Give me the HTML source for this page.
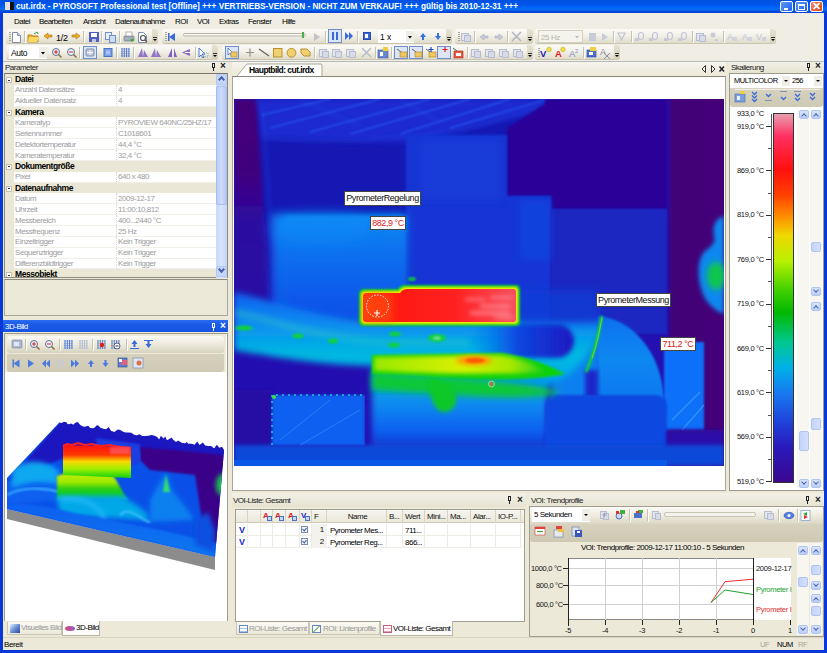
<!DOCTYPE html>
<html><head><meta charset="utf-8">
<style>
*{margin:0;padding:0;box-sizing:border-box}
html,body{width:827px;height:653px;overflow:hidden;background:#0838d8;font-family:"Liberation Sans",sans-serif;font-size:9px;color:#000}
.a{position:absolute}
#title{left:0;top:0;width:827px;height:13px;background:linear-gradient(#0050e0 0%,#0056ec 35%,#0062f8 55%,#0a6cf0 75%,#0048dc 88%,#0040d4 100%)}
#title .t{left:16px;top:0px;color:#fff;font-weight:bold;font-size:8.2px;line-height:13px;white-space:nowrap}
#client{left:3px;top:13px;width:821px;height:637px;background:#ece9d8}
.menu span{position:absolute;top:17px;font-size:8px;letter-spacing:-0.55px;line-height:10px;white-space:nowrap}
.tb{position:absolute;height:15px;border-radius:3px;background:linear-gradient(#fbfaf6 0%,#f3f1e8 45%,#dfdccb 100%);border-bottom:1px solid #c9c5b0}
.grip{position:absolute;left:3px;top:3px;width:2px;height:9px;background:repeating-linear-gradient(#a9a58e 0 1px,transparent 1px 2px)}
.chev{position:absolute;width:6px;height:15px;top:0;right:0;background:linear-gradient(#e6e2d0,#d2ceb8);border-radius:0 3px 3px 0}
.chev:after{content:"";position:absolute;left:1px;top:10px;width:0;height:0;border-left:2px solid transparent;border-right:2px solid transparent;border-top:2px solid #000}.chev:before{content:"";position:absolute;left:1px;top:8px;width:4px;height:1px;background:#333}
.sep{position:absolute;top:2px;width:1px;height:11px;background:#c5c2b2}
.ic{position:absolute;width:10px;height:10px}
.ph{position:absolute;height:12px;background:#ece9d8;border-bottom:1px solid #fff}
.ph .t{position:absolute;left:3px;top:1px;font-size:9px;line-height:10px;color:#222;white-space:nowrap}

.tx{font-size:8px;letter-spacing:-0.5px;white-space:nowrap;line-height:10px}
.pgc{left:0px;width:211px;height:10.86px;background:#ebe7d6;font-weight:bold;font-size:8.5px;line-height:11px;letter-spacing:-0.45px}
.pgc span{position:absolute;left:10px;top:0}
.pgc .mb{position:absolute;left:1px;top:3px;width:6px;height:6px;border:1px solid #c4c0ac;background:#fff}
.pgc .mb:after{content:"";position:absolute;left:1px;top:1.5px;width:2px;height:1px;background:#333}
.pgr{left:0px;width:211px;height:10.86px;background:#fff;color:#9c9c9c;font-size:8px;letter-spacing:-0.45px;line-height:10.5px;border-bottom:1px solid #f0efe8}
.pgr:before{content:"";position:absolute;left:0;top:-1px;width:9px;height:11.86px;background:#ebe7d6}
.pgr .n{position:absolute;left:10px;top:0.5px}
.pgr .v{position:absolute;left:113px;top:0.5px}
.pgr:after{content:"";position:absolute;left:111px;top:0;width:1px;height:10px;border-left:1px dotted #d8d8d8}

.lbl{background:#fff;border:1px solid #444;font-size:9px;line-height:12px;letter-spacing:-0.45px;text-align:center;white-space:nowrap;color:#111}
.lbl.red{color:#e02020}

.hdr{position:absolute;height:12px;background:linear-gradient(#f3f1e7,#e6e3d2)}
.pin{position:absolute;width:3px;height:5px;border:1px solid #222}
.pin:after{content:"";position:absolute;left:0px;top:4px;width:1px;height:3px;background:#222}
.xx{position:absolute;font-size:10px;line-height:12px;font-weight:bold;color:#222}
.sbb{position:absolute;width:10px;height:9px;background:linear-gradient(#d8e4fd,#bcd0f8);border:1px solid #b0c4f0;border-radius:2px}
.sbb.u:after{content:"";position:absolute;left:2px;top:3px;width:3px;height:3px;border-left:1.5px solid #4d61a8;border-top:1.5px solid #4d61a8;transform:rotate(45deg)}
.sbb.d:after{content:"";position:absolute;left:2px;top:0px;width:3px;height:3px;border-right:1.5px solid #4d61a8;border-bottom:1.5px solid #4d61a8;transform:rotate(45deg)}
.sth{position:absolute;width:10px;height:10px;background:linear-gradient(90deg,#c4d4fa,#d4e0fc);border:1px solid #b0c4f0;border-radius:2px}
.sl{position:absolute;font-size:7.5px;line-height:9px;letter-spacing:-0.3px;white-space:nowrap;color:#111}
.gh{position:absolute;top:510px;height:13px;border-right:1px solid #d6d3c3;font-size:8px;line-height:13px;letter-spacing:-0.4px;white-space:nowrap;color:#111;overflow:hidden}
.gc{position:absolute;height:12px;border-right:1px solid #ecebe4;border-bottom:1px solid #ecebe4;font-size:8px;line-height:12px;letter-spacing:-0.3px;white-space:nowrap;color:#111}
</style></head><body>
<div id="title" class="a">
 <div class="a" style="left:5px;top:2px;width:9px;height:8px;background:linear-gradient(90deg,#e8e0e0 0 50%,#111 50%)"></div>
 <div class="a t">cut.irdx - PYROSOFT Professional test [Offline] +++ VERTRIEBS-VERSION - NICHT ZUM VERKAUF! +++ gültig bis 2010-12-31 +++</div>
 <div class="a" style="left:780px;top:1px;width:13px;height:11px;border:1px solid #fff;border-radius:2px;background:linear-gradient(135deg,#5a9cff,#1e5ff0)"><div class="a" style="left:3px;top:6px;width:4px;height:2px;background:#fff"></div></div>
 <div class="a" style="left:795px;top:1px;width:13px;height:11px;border:1px solid #fff;border-radius:2px;background:linear-gradient(135deg,#5a9cff,#1e5ff0)"><div class="a" style="left:2px;top:2px;width:7px;height:6px;border:1px solid #fff;border-top-width:2px"></div></div>
 <div class="a" style="left:810px;top:1px;width:13px;height:11px;border:1px solid #fff;border-radius:2px;background:linear-gradient(135deg,#f08a6a,#d8401a)"><div class="a" style="left:1px;top:-2px;color:#fff;font-weight:bold;font-size:11px;line-height:12px">✕</div></div>
</div>
<div id="client" class="a"></div>
<div class="a" style="left:3px;top:13px;width:821px;height:48px;background:#f0eee4"></div>
<!-- menu -->
<div class="menu">
 <span style="left:14px">Datei</span><span style="left:39px">Bearbeiten</span><span style="left:83px">Ansicht</span><span style="left:115px">Datenaufnahme</span><span style="left:175px">ROI</span><span style="left:197px">VOI</span><span style="left:219px">Extras</span><span style="left:248px">Fenster</span><span style="left:282px">Hilfe</span>
</div>
<!-- toolbars row1 -->
<div class="tb" style="left:6px;top:29px;width:152px"><div class="grip"></div><div class="chev"></div></div>
<div class="tb" style="left:162px;top:29px;width:290px"><div class="grip"></div><div class="chev"></div></div>
<div class="tb" style="left:455px;top:29px;width:78px"><div class="grip"></div><div class="chev"></div></div>
<div class="tb" style="left:535px;top:29px;width:241px"><div class="grip"></div><div class="chev"></div></div>
<!-- toolbars row2 -->
<div class="tb" style="left:6px;top:45px;width:212px"><div class="grip"></div><div class="chev"></div></div>
<div class="tb" style="left:222px;top:45px;width:311px"><div class="grip"></div><div class="chev"></div></div>
<div class="tb" style="left:535px;top:45px;width:85px"><div class="grip"></div><div class="chev"></div></div>


<!-- Parameter panel -->
<div class="a" style="left:3px;top:61px;width:821px;height:1px;background:#b4bcbc"></div>
<div class="a" style="left:3px;top:62px;width:225px;height:11px;background:linear-gradient(#f3f1e7,#e6e3d2)"></div>
<div class="a tx" style="left:5px;top:63px;color:#222">Parameter</div>
<div class="a" style="left:212px;top:63px;width:3px;height:5px;border:1px solid #222;border-bottom-width:1px"></div><div class="a" style="left:213px;top:68px;width:1px;height:3px;background:#222"></div>
<div class="a" style="left:220px;top:60px;font-size:10px;line-height:12px;font-weight:bold;color:#222">×</div>
<div class="a" style="left:4px;top:73px;width:224px;height:205px;border:1px solid #8e8c7e;border-top:1px solid #7a786c;background:#fff;overflow:hidden">
<div class="a pgc" style="top:0.00px"><div class="mb"></div><span>Datei</span></div>
<div class="a pgr" style="top:10.86px"><span class="n">Anzahl Datensätze</span><span class="v">4</span></div>
<div class="a pgr" style="top:21.72px"><span class="n">Aktueller Datensatz</span><span class="v">4</span></div>
<div class="a pgc" style="top:32.58px"><div class="mb"></div><span>Kamera</span></div>
<div class="a pgr" style="top:43.44px"><span class="n">Kameratyp</span><span class="v">PYROVIEW 640NC/25HZ/17 X13</span></div>
<div class="a pgr" style="top:54.30px"><span class="n">Seriennummer</span><span class="v">C1018601</span></div>
<div class="a pgr" style="top:65.16px"><span class="n">Detektortemperatur</span><span class="v">44,4 °C</span></div>
<div class="a pgr" style="top:76.02px"><span class="n">Kameratemperatur</span><span class="v">32,4 °C</span></div>
<div class="a pgc" style="top:86.88px"><div class="mb"></div><span>Dokumentgröße</span></div>
<div class="a pgr" style="top:97.74px"><span class="n">Pixel</span><span class="v">640 x 480</span></div>
<div class="a pgc" style="top:108.60px"><div class="mb"></div><span>Datenaufnahme</span></div>
<div class="a pgr" style="top:119.46px"><span class="n">Datum</span><span class="v">2009-12-17</span></div>
<div class="a pgr" style="top:130.32px"><span class="n">Uhrzeit</span><span class="v">11:00:10,812</span></div>
<div class="a pgr" style="top:141.18px"><span class="n">Messbereich</span><span class="v">400...2440 °C</span></div>
<div class="a pgr" style="top:152.04px"><span class="n">Messfrequenz</span><span class="v">25 Hz</span></div>
<div class="a pgr" style="top:162.90px"><span class="n">Einzeltrigger</span><span class="v">Kein Trigger</span></div>
<div class="a pgr" style="top:173.76px"><span class="n">Sequenztrigger</span><span class="v">Kein Trigger</span></div>
<div class="a pgr" style="top:184.62px"><span class="n">Differenzbildtrigger</span><span class="v">Kein Trigger</span></div>
<div class="a pgc" style="top:195.48px"><div class="mb"></div><span>Messobjekt</span></div>
</div>

<div class="a" style="left:216px;top:74px;width:11px;height:204px;background:linear-gradient(90deg,#c8d8fb,#d8e4fd 50%,#c4d4f8)"></div>
<div class="a" style="left:216px;top:86px;width:11px;height:119px;background:linear-gradient(90deg,#b9cdf8,#cfdcfb 50%,#b4c8f4);border:1px solid #a8bdf0;border-radius:2px"></div>
<div class="a" style="left:216px;top:74px;width:11px;height:11px;background:#c5d6fc;border:1px solid #b4c8f4;border-radius:2px"></div>
<div class="a" style="left:219px;top:77px;width:5px;height:5px;border-left:2px solid #4d61a8;border-top:2px solid #4d61a8;transform:rotate(45deg)"></div>
<div class="a" style="left:216px;top:266px;width:11px;height:11px;background:#c5d6fc;border:1px solid #b4c8f4;border-radius:2px"></div>
<div class="a" style="left:219px;top:267px;width:5px;height:5px;border-right:2px solid #4d61a8;border-bottom:2px solid #4d61a8;transform:rotate(45deg)"></div>
<!-- description area -->
<div class="a" style="left:4px;top:279px;width:224px;height:37px;background:#ece9d8;border:1px solid #a9a79a;border-top:1px solid #8e8c7e"></div>
<!-- 3D-Bild panel -->
<div class="a" style="left:3px;top:320px;width:225px;height:12px;background:linear-gradient(#2a6cf0,#1a5ae8 40%,#1654e0)"></div>
<div class="a tx" style="left:5px;top:322px;color:#fff">3D-Bild</div>
<div class="a" style="left:212px;top:323px;width:3px;height:5px;border:1px solid #fff"></div><div class="a" style="left:213px;top:328px;width:1px;height:3px;background:#fff"></div>
<div class="a" style="left:220px;top:320px;font-size:10px;line-height:12px;font-weight:bold;color:#fff">×</div>
<div class="a" style="left:4px;top:333px;width:224px;height:289px;border:1px solid #9d9b8c;background:#fff"></div>
<div class="a" style="left:5px;top:334px;width:221px;height:38px;background:#ece9d8"></div>
<div class="a" style="left:7px;top:336px;width:217px;height:17px;border-radius:3px;background:linear-gradient(#fbfaf5,#e9e6d6 60%,#d6d2bf)"></div>
<div class="a" style="left:7px;top:354px;width:217px;height:18px;border-radius:0 0 3px 3px;background:linear-gradient(#d5d1bd,#cfcab5)"></div>
<svg class="a" style="left:5px;top:372px" width="220" height="249" viewBox="5 372 220 249">
<defs>
<filter id="c1" x="-20%" y="-20%" width="140%" height="140%"><feGaussianBlur stdDeviation="1"/></filter>
<filter id="c2" x="-30%" y="-30%" width="160%" height="160%"><feGaussianBlur stdDeviation="2.5"/></filter>
<filter id="c4" x="-30%" y="-30%" width="160%" height="160%"><feGaussianBlur stdDeviation="4"/></filter>
<clipPath id="surf"><polygon points="59,423 224,450 215,557 7,509 7,478"/></clipPath>
<linearGradient id="rb" x1="0" y1="0" x2="0" y2="1"><stop offset="0" stop-color="#ff1010"/><stop offset="0.3" stop-color="#ff3800"/><stop offset="0.5" stop-color="#f8d800"/><stop offset="0.72" stop-color="#a0f000"/><stop offset="1" stop-color="#10d010"/></linearGradient>
<linearGradient id="hill" x1="0" y1="0" x2="0" y2="1"><stop offset="0" stop-color="#d0f000"/><stop offset="0.4" stop-color="#a0e800"/><stop offset="0.6" stop-color="#30d010"/><stop offset="0.8" stop-color="#10c830"/><stop offset="1" stop-color="#10b0c0"/></linearGradient>
<linearGradient id="front" x1="0" y1="0" x2="0" y2="1"><stop offset="0" stop-color="#0a60f0"/><stop offset="1" stop-color="#0a78f0"/></linearGradient>
</defs>
<!-- gray base -->
<polygon points="7,509 215,557 215,570 7,519" fill="#8c8c8c"/>
<g clip-path="url(#surf)">
<rect x="5" y="420" width="220" height="140" fill="#0a50e8"/>
<polygon points="59,423 224,450 224,468 140,452 95,445 40,468 7,482" fill="#1c18c0" filter="url(#c1)"/>
<polygon points="140,447 224,455 224,545 205,540 195,475 150,470 140,460" fill="#3a0488" filter="url(#c1)"/>
<polygon points="96,438 140,444 140,464 100,468" fill="#1a3ce0" filter="url(#c1)"/>
<polygon points="7,482 40,466 60,468 60,500 7,505" fill="#0a60f0" filter="url(#c2)"/>
<path d="M12,470 C25,458 45,460 58,470 L58,484 C40,480 25,482 12,488 Z" fill="#10a8f0" filter="url(#c2)"/>
<path d="M7,495 C20,488 40,486 60,492" stroke="#40b8ff" stroke-width="2" fill="none" filter="url(#c1)"/>
<path d="M57,500 L57,476 C70,470 100,468 112,474 C118,482 122,492 128,500 Z" fill="url(#hill)" filter="url(#c1)"/>
<ellipse cx="98" cy="472" rx="8" ry="2.5" fill="#ffa000" filter="url(#c1)"/>
<path d="M57,497 L124,497 C135,505 150,512 150,520 L60,515 Z" fill="#00a8e8" filter="url(#c2)"/>
<path d="M60,500 C80,495 100,505 105,520" stroke="#30c0ff" stroke-width="3" fill="none" filter="url(#c2)"/>
<path d="M150,500 L166,472 L172,490 C180,500 188,510 195,520 L150,522 Z" fill="#0a80f0" filter="url(#c2)"/>
<path d="M163,492 L166,474 L170,492 Z" fill="#30e070" filter="url(#c1)"/>
<ellipse cx="223" cy="485" rx="7" ry="11" fill="#18c848" filter="url(#c2)"/>
<path d="M7,505 C40,500 70,515 110,520 C150,528 190,535 215,545 L215,557 L7,509 Z" fill="url(#front)" filter="url(#c1)"/>
<path d="M120,515 C130,505 140,520 150,522" stroke="#40c0ff" stroke-width="2" fill="none" filter="url(#c1)"/>
<polygon points="195,520 208,512 215,530 215,552 195,545" fill="#0a50e0" filter="url(#c2)"/>
</g>
<!-- spikes on back edge -->
<polygon points="59.0,422.5 61.7,422.9 63.9,421.8 66.4,422.2 68.0,424.5 71.3,423.5 73.3,424.8 75.2,422.7 77.7,422.1 80.3,425.0 83.0,426.4 85.0,426.8 88.2,425.8 90.5,428.2 93.4,428.6 95.2,426.9 96.8,425.2 98.3,425.4 100.4,427.8 103.3,428.8 106.2,429.2 108.5,427.1 111.2,431.0 114.4,432.1 116.0,430.8 117.9,429.6 120.3,430.0 123.5,432.1 126.0,432.5 128.7,432.4 131.4,432.8 133.3,434.2 136.2,435.6 139.4,434.2 142.2,436.1 145.1,436.1 148.6,435.7 151.2,435.1 154.0,435.5 157.2,437.1 159.2,439.4 160.8,435.7 163.6,438.6 165.3,436.4 166.9,440.2 168.5,439.4 171.5,437.4 173.2,439.7 176.0,442.1 178.2,440.5 180.4,441.9 182.9,443.3 185.0,443.6 186.7,441.9 188.3,443.7 191.7,443.7 194.5,444.7 197.3,441.6 199.5,445.0 202.9,442.6 205.2,445.4 208.4,446.0 211.2,445.9 214.1,448.4 216.8,444.8 219.3,447.7 222.1,446.7 224,450 224,454 59,427" fill="#1c18c0"/>
<!-- red block -->
<polygon points="63,445 131,447 131,478 63,475" fill="url(#rb)"/>
<polyline points="63,446 67,444 72,445 78,443 85,445 92,444 100,446 110,445 120,447 131,448" fill="none" stroke="#ff2020" stroke-width="2"/>
<rect x="110" y="447" width="20" height="7" fill="#ff7090" opacity="0.5" filter="url(#c1)"/>
</svg>

<!-- tabs -->
<div class="a" style="left:3px;top:621px;width:225px;height:16px;background:#ece9d8"></div>
<div class="a" style="left:7px;top:622px;width:55px;height:13px;background:linear-gradient(#fbfaf5,#ece9d8);border:1px solid #c9c6b5;border-top:none"></div>
<div class="a" style="left:62px;top:621px;width:38px;height:15px;background:#fcfcfa;border:1px solid #b9b6a5;border-top:none"></div>
<div class="a" style="left:10px;top:624px;width:10px;height:9px;background:linear-gradient(135deg,#e8f0ff,#6a90d8 50%,#2a4a9a)"></div>
<div class="a tx" style="left:21px;top:623px;color:#9a9a9a">Visuelles Bild</div>
<div class="a" style="left:65px;top:626px;width:10px;height:5px;border-radius:50%;background:linear-gradient(90deg,#e04070,#8a60d0)"></div>
<div class="a tx" style="left:76px;top:623px;color:#000">3D-Bild</div>


<!-- main doc -->
<div class="a" style="left:232px;top:62px;width:494px;height:14px;background:linear-gradient(#f6f4ec,#ece9d8)"></div>
<svg class="a" style="left:236px;top:63px" width="88" height="14"><path d="M1,13 L11,1 L85,1 L86,2 L86,13" fill="#fff" stroke="#a9a795"/></svg>
<div class="a" style="left:249px;top:65px;font-weight:bold;font-size:8.5px;line-height:10px;letter-spacing:-0.55px">Hauptbild: cut.irdx</div>
<svg class="a" style="left:700px;top:64px" width="26" height="10"><path d="M5.5,1.5 L2,5 L5.5,8.5 Z" fill="#f6f4ec" stroke="#333"/><path d="M11.5,1.5 L15,5 L11.5,8.5 Z" fill="#f6f4ec" stroke="#333"/><path d="M19.5,2.5 L24,7.5 M24,2.5 L19.5,7.5" stroke="#222" stroke-width="1.5"/></svg>
<div class="a" style="left:232px;top:76px;width:494px;height:415px;background:#fff;border:1px solid #a6a498;border-top:1px solid #8a887a"></div>
<svg class="a" style="left:234px;top:99px" width="490" height="367" viewBox="234 99 490 367">
<defs>
<filter id="b1" x="-20%" y="-20%" width="140%" height="140%"><feGaussianBlur stdDeviation="1"/></filter>
<filter id="b2" x="-20%" y="-20%" width="140%" height="140%"><feGaussianBlur stdDeviation="2"/></filter>
<filter id="b3" x="-30%" y="-30%" width="160%" height="160%"><feGaussianBlur stdDeviation="3"/></filter>
<filter id="b5" x="-30%" y="-30%" width="160%" height="160%"><feGaussianBlur stdDeviation="5"/></filter>
<filter id="b8" x="-50%" y="-50%" width="200%" height="200%"><feGaussianBlur stdDeviation="8"/></filter>
<linearGradient id="lstripv" x1="0" y1="0" x2="0" y2="1"><stop offset="0" stop-color="#440078"/><stop offset="0.3" stop-color="#40047e"/><stop offset="0.5" stop-color="#2c08a0"/><stop offset="1" stop-color="#2808a4"/></linearGradient>
<linearGradient id="lstrip" x1="0" y1="0" x2="1" y2="0"><stop offset="0" stop-color="#440078"/><stop offset="0.75" stop-color="#40047e"/><stop offset="1" stop-color="#2410b0"/></linearGradient>
<linearGradient id="rstrip" x1="0" y1="0" x2="1" y2="0"><stop offset="0" stop-color="#300a9c"/><stop offset="0.12" stop-color="#420278"/><stop offset="1" stop-color="#440078"/></linearGradient>
<linearGradient id="band" x1="0" y1="0" x2="0" y2="1"><stop offset="0" stop-color="#0a60f0"/><stop offset="0.35" stop-color="#0a90f0"/><stop offset="0.62" stop-color="#00b8e0"/><stop offset="0.8" stop-color="#00b0e8"/><stop offset="1" stop-color="#0a80f0"/></linearGradient>
<linearGradient id="redin" x1="0" y1="0" x2="1" y2="0"><stop offset="0" stop-color="#ff3010"/><stop offset="0.2" stop-color="#ff1a10"/><stop offset="0.6" stop-color="#ff2020"/><stop offset="1" stop-color="#f85060"/></linearGradient>
<linearGradient id="hole" x1="0" y1="0" x2="1" y2="0"><stop offset="0" stop-color="#0a70f0" stop-opacity="0"/><stop offset="0.45" stop-color="#0a48e0"/><stop offset="1" stop-color="#2018c0"/></linearGradient>
<linearGradient id="llg" x1="0" y1="0" x2="0" y2="1"><stop offset="0" stop-color="#0a8cf4"/><stop offset="0.3" stop-color="#0a74f0"/><stop offset="1" stop-color="#0850e8"/></linearGradient>
<linearGradient id="lowbar" x1="0" y1="0" x2="1" y2="0"><stop offset="0" stop-color="#98e800"/><stop offset="0.5" stop-color="#d8f000"/><stop offset="0.8" stop-color="#a8e800"/><stop offset="1" stop-color="#20d020"/></linearGradient>
<linearGradient id="lowz" x1="0" y1="0" x2="0" y2="1"><stop offset="0" stop-color="#00b0e0"/><stop offset="0.4" stop-color="#0890f0"/><stop offset="0.75" stop-color="#0a60f0"/><stop offset="1" stop-color="#1a30c8"/></linearGradient>
<linearGradient id="half" x1="0" y1="0" x2="0" y2="1"><stop offset="0" stop-color="#0a70f0"/><stop offset="0.5" stop-color="#0888f0"/><stop offset="1" stop-color="#0a78f0"/></linearGradient>
</defs>
<!-- background -->
<rect x="234" y="99" width="490" height="367" fill="#2410b0"/>
<!-- ceiling -->
<rect x="254" y="99" width="416" height="120" fill="#1618b4"/>
<polygon points="254,99 560,99 534,112 470,128 420,142 330,140 262,138" fill="#1a2ad0" filter="url(#b3)"/>
<g stroke="#2a6cf4" stroke-width="1.6" opacity="0.6" filter="url(#b1)" fill="none">
<path d="M270,128 L380,99 M310,132 L430,99 M350,134 L470,99 M400,134 L510,99 M450,128 L545,100 M262,115 L330,99"/>
</g>
<g stroke="#2a60f0" stroke-width="2" opacity="0.3" filter="url(#b2)" fill="none">
<path d="M262,138 C330,142 400,142 470,128 L540,108 M300,100 L360,126 M400,100 L440,122 M262,108 L272,240"/>
</g>
<!-- left purple strip -->
<polygon points="234,99 256,99 264,214 270,300 272,345 234,345" fill="url(#lstripv)" filter="url(#b2)"/>
<!-- right purple strip -->
<rect x="667" y="99" width="57" height="367" fill="url(#rstrip)"/>
<!-- upper dark zone right -->
<polygon points="545,99 667,99 667,209 551,209 551,196 507,196 507,128 545,104" fill="#2c0498" filter="url(#b1)"/>
<!-- mid block -->
<polygon points="406,135 507,135 507,196 551,196 551,330 406,330" fill="#1834d4" filter="url(#b1)"/>
<rect x="551" y="209" width="116" height="125" fill="#1c26c0" filter="url(#b1)"/>
<rect x="420" y="140" width="80" height="60" fill="#1a40dc" opacity="0.6" filter="url(#b5)"/>
<rect x="520" y="200" width="31" height="60" fill="#0a48e0" opacity="0.6" filter="url(#b3)"/>
<!-- lower-left lighter region -->
<rect x="272" y="214" width="134" height="110" fill="url(#llg)" filter="url(#b5)"/><rect x="285" y="216" width="121" height="100" fill="url(#llg)" filter="url(#b2)"/>
<ellipse cx="320" cy="230" rx="50" ry="14" fill="#0a88f8" opacity="0.5" filter="url(#b8)"/>
<!-- bottom-left dark -->
<rect x="234" y="350" width="140" height="50" fill="#2410b0" filter="url(#b3)"/>
<rect x="234" y="390" width="38" height="60" fill="#2808a4" filter="url(#b2)"/>
<!-- lower middle cyan-blue zone -->
<rect x="372" y="366" width="175" height="86" fill="url(#lowz)" filter="url(#b3)"/>
<!-- right structures -->
<rect x="551" y="330" width="50" height="70" fill="#0a80f0" filter="url(#b3)"/>
<path d="M598,316 C630,318 662,350 664,401 L598,401 Z" fill="url(#half)" filter="url(#b1)"/>
<rect x="585" y="370" width="13" height="32" fill="#1c28c8" filter="url(#b2)"/>
<rect x="664" y="342" width="40" height="88" fill="#0a70f8" filter="url(#b1)"/>
<path d="M672,420 L700,392 M682,430 L704,405" stroke="#4aa0ff" stroke-width="1.5" opacity="0.6"/>
<rect x="545" y="395" width="122" height="71" rx="12" fill="#0a48e0" filter="url(#b1)"/>
<rect x="667" y="430" width="57" height="36" fill="#2a10a8" filter="url(#b2)"/>
<!-- bottom strip -->
<rect x="234" y="445" width="490" height="21" fill="#0848d8" filter="url(#b2)"/>
<rect x="234" y="460" width="433" height="6" fill="#0a58e8"/>
<!-- pipe band -->
<path d="M234,292 C270,300 320,318 370,322 L600,320 L600,330 C590,360 560,392 520,392 L380,366 C320,366 270,356 234,350 Z" fill="url(#band)" filter="url(#b3)"/>
<path d="M234,312 C280,322 320,338 380,342 L470,342" stroke="#30d0c0" stroke-width="6" fill="none" opacity="0.45" filter="url(#b3)"/>
<g fill="#10d040" filter="url(#b1)">
<ellipse cx="244" cy="328" rx="9" ry="2.5"/><ellipse cx="298" cy="336" rx="6" ry="2.5"/><ellipse cx="333" cy="341" rx="5" ry="2.5"/>
<ellipse cx="395" cy="334" rx="6" ry="2.5"/><ellipse cx="394" cy="345" rx="6" ry="2.5"/><ellipse cx="437" cy="338" rx="9" ry="4"/>
</g>
<ellipse cx="437" cy="338" rx="4" ry="1.6" fill="#80e0a0" filter="url(#b1)"/>
<!-- dark hole in pipe -->
<rect x="470" y="324" width="104" height="34" rx="17" fill="url(#hole)" filter="url(#b2)"/>
<rect x="520" y="290" width="80" height="34" fill="#0a40d8" opacity="0.7" filter="url(#b5)"/>
<!-- thin green arc -->
<path d="M602,316 C598,335 595,352 586,372" stroke="#10d040" stroke-width="3" fill="none" filter="url(#b1)"/>
<path d="M602,318 C599,333 597,345 592,358" stroke="#b0f000" stroke-width="1" fill="none" opacity="0.6"/>
<!-- right top blob -->
<path d="M724,216 C716,218 712,226 714,236 C716,242 712,246 704,252 C696,262 697,285 706,300 C712,308 718,312 724,314 Z" fill="#0a88f0" filter="url(#b2)"/><ellipse cx="716" cy="276" rx="9" ry="14" fill="#10c848" filter="url(#b3)"/>
<!-- lower left box -->
<rect x="272" y="395" width="92" height="50" fill="#0a60f0" filter="url(#b1)"/>
<path d="M272,445 V395 H364" fill="none" stroke="#20c8d0" stroke-width="1.5" stroke-dasharray="2 4"/><path d="M364,395 V445" fill="none" stroke="#0a80ff" stroke-width="1" opacity="0.6"/>
<path d="M280,440 L330,400 M300,445 L360,410" stroke="#40a0ff" stroke-width="1" opacity="0.5"/>
<circle cx="274" cy="397" r="2" fill="#40e040"/>
<!-- lower green bar and green sweep -->
<path d="M372,372 C420,376 520,380 560,392 C545,398 500,398 470,396 C440,394 400,392 372,390 Z" fill="#10c838" filter="url(#b3)"/>
<path d="M428,378 C440,380 452,385 456,395 C458,405 452,412 444,412 C436,412 432,402 430,392 Z" fill="#10c828" filter="url(#b2)"/>
<path d="M372,355 L502,353 C525,356 548,364 565,374 C530,382 470,380 420,376 L372,374 Z" fill="#10d010" filter="url(#b1)"/>
<path d="M374,357 L500,355 C520,358 535,364 545,372 C500,375 440,374 374,371 Z" fill="url(#lowbar)" filter="url(#b2)"/>
<ellipse cx="474" cy="360.5" rx="18" ry="5" fill="#ffa000" filter="url(#b2)"/>
<ellipse cx="475" cy="360.5" rx="10" ry="2.8" fill="#ff5a00" filter="url(#b1)"/>
<path d="M470,412 L546,412" stroke="#1a28c0" stroke-width="6" opacity="0.7" filter="url(#b2)"/>
<!-- red bar -->
<path d="M359,294 C359,291 361,289 365,289 L398,289 C400,286 402,285 406,285 L516,285 C519,285 520,287 520,290 L520,322 C520,325 518,326 515,326 L364,326 C361,326 359,324 359,321 Z" fill="#10d020" filter="url(#b1)"/>
<path d="M361,295 C361,292 363,291 366,291 L399,291 C401,288 403,287 406,287 L515,287 C517,287 518,289 518,291 L518,321 C518,323 517,324 515,324 L365,324 C362,324 361,322 361,320 Z" fill="#f0f000" filter="url(#b1)"/>
<path d="M363,296 C363,294 364,293 367,293 L400,293 C402,290 404,289 407,289 L514,289 C515,289 516,290 516,292 L516,320 C516,321 515,322 514,322 L366,322 C364,322 363,321 363,319 Z" fill="url(#redin)"/>
<rect x="363" y="294" width="30" height="28" fill="#ff5a10" opacity="0.5" filter="url(#b3)"/>
<g fill="#ffb0b8" opacity="0.5" filter="url(#b2)"><rect x="465" y="298" width="20" height="3"/><rect x="480" y="304" width="30" height="4"/><rect x="490" y="296" width="22" height="3"/><rect x="470" y="311" width="40" height="4"/><rect x="495" y="316" width="18" height="3"/></g>
<ellipse cx="412" cy="279" rx="4" ry="2" fill="#10c040" filter="url(#b1)"/>
<!-- dotted circle -->
<circle cx="377.5" cy="306" r="11" fill="none" stroke="#fff" stroke-width="1" stroke-dasharray="1.5 1.5"/>
<path d="M374,313 h6 M377,310 v6" stroke="#fff" stroke-width="1.2"/>
<!-- crosshair -->
<path d="M488,384 h7 M491.5,380 v8" stroke="#ff5050" stroke-width="1.2"/>
<circle cx="491.5" cy="384" r="3" fill="none" stroke="#80ffa0" stroke-width="0.8"/>
</svg>
<div class="a lbl" style="left:344px;top:191px;width:77px;height:15px">PyrometerRegelung</div>
<div class="a lbl red" style="left:370px;top:216px;width:36px;height:14px">882,9 °C</div>
<div class="a lbl" style="left:596px;top:293px;width:75px;height:14px">PyrometerMessung</div>
<div class="a lbl red" style="left:660px;top:337px;width:36px;height:14px">711,2 °C</div>


<!-- Skalierung -->
<div class="hdr" style="left:729px;top:62px;width:95px;height:11px"></div>
<div class="a tx" style="left:731px;top:63px;color:#222">Skalierung</div>
<div class="pin" style="left:807px;top:63px"></div><div class="xx" style="left:815px;top:60px">×</div>
<div class="a" style="left:729px;top:73px;width:95px;height:418px;background:#fff;border:1px solid #9d9b8c"></div>
<div class="a" style="left:730px;top:74px;width:93px;height:14px;background:#fff"></div>
<div class="a tx" style="left:734px;top:76px;font-size:7.5px">MULTICOLOR</div>
<div class="a" style="left:782px;top:76px;width:8px;height:10px;background:#eeede6"></div>
<div class="a" style="left:784px;top:80px;width:0;height:0;border:2px solid transparent;border-top:2px solid #000"></div>
<div class="a tx" style="left:792px;top:76px;font-size:7.5px">256</div>
<div class="a" style="left:814px;top:76px;width:8px;height:10px;background:#eeede6"></div>
<div class="a" style="left:816px;top:80px;width:0;height:0;border:2px solid transparent;border-top:2px solid #000"></div>
<div class="a" style="left:730px;top:88px;width:93px;height:19px;background:linear-gradient(#d7d3c0,#cdc9b4);border-radius:0 0 3px 3px"></div>
<div class="a" style="left:735px;top:89px;width:85px;height:1px;background:#eeece2"></div>
<svg class="a" style="left:730px;top:88px" width="93" height="19" viewBox="730 88 93 19">
<rect x="735" y="94" width="10" height="8" fill="#7aa0e0" stroke="#4a6ab0" stroke-width="0.6"/><rect x="740" y="91" width="5" height="3" fill="#f0d040"/><rect x="737" y="96" width="3" height="4" fill="#e8f0ff"/>
<path d="M752,92 l2.5,2.5 l2.5,-2.5 M752,95.5 l2.5,2.5 l2.5,-2.5 M752,99 l2.5,2.5 l2.5,-2.5" stroke="#3a6ad8" stroke-width="1.3" fill="none"/>
<path d="M766,94 l2.5,2.5 l2.5,-2.5" stroke="#3a6ad8" stroke-width="1.3" fill="none"/><path d="M765,100.5 h7" stroke="#8090b0" stroke-width="1"/>
<path d="M780,91.5 h7" stroke="#8090b0" stroke-width="1"/><path d="M781,97 l2.5,2.5 l2.5,-2.5" stroke="#3a6ad8" stroke-width="1.3" fill="none"/>
<path d="M794,91.5 h7" stroke="#8090b0" stroke-width="1"/><path d="M795,94 l2.5,2.5 l2.5,-2.5 M795,98 l2.5,2.5 l2.5,-2.5" stroke="#3a6ad8" stroke-width="1.3" fill="none"/>
<path d="M810,93 l2.5,2.5 l2.5,-2.5 M810,97 l2.5,2.5 l2.5,-2.5" stroke="#3a6ad8" stroke-width="1.3" fill="none"/>
</svg>
<div class="a" style="left:773px;top:113px;width:21px;height:370px;border:1px solid #333;background:linear-gradient(#e8a0b0 0%,#ff3060 6%,#ff1010 15%,#ff4000 22%,#ff9000 28%,#f0d800 33%,#b8f000 40%,#40d000 48%,#00b800 54%,#00c890 62%,#00b0e8 69%,#1878f0 76%,#2040d8 84%,#2a18b8 91%,#3c0890 100%)"></div>
<div class="a" style="left:771px;top:114px;width:1px;height:368px;background:#555"></div>
<div class="a" style="left:797px;top:110px;width:12px;height:378px;background:#f7f6f0"></div>
<div class="a" style="left:810px;top:110px;width:12px;height:378px;background:#f7f6f0"></div>
<div class="sbb u" style="left:799px;top:110px"></div>
<div class="sbb u" style="left:811px;top:110px"></div>
<div class="sth" style="left:799px;top:431px;height:20px"></div>
<div class="sbb d" style="left:799px;top:479px"></div>
<div class="sth" style="left:811px;top:242px"></div>
<div class="sbb d" style="left:811px;top:287px"></div>
<div class="sbb u" style="left:811px;top:302px"></div>
<div class="sth" style="left:811px;top:418px;height:12px"></div>
<div class="sbb d" style="left:811px;top:479px"></div>
<div class="sl" style="left:737px;top:108.5px">933,0 °C</div>
<div class="sl" style="left:737px;top:121.5px">919,0 °C</div>
<div class="a" style="left:766px;top:126.0px;width:5px;height:1px;background:#333"></div>
<div class="sl" style="left:737px;top:165.9px">869,0 °C</div>
<div class="a" style="left:766px;top:170.4px;width:5px;height:1px;background:#333"></div>
<div class="sl" style="left:737px;top:210.3px">819,0 °C</div>
<div class="a" style="left:766px;top:214.8px;width:5px;height:1px;background:#333"></div>
<div class="sl" style="left:737px;top:254.7px">769,0 °C</div>
<div class="a" style="left:766px;top:259.2px;width:5px;height:1px;background:#333"></div>
<div class="sl" style="left:737px;top:299.1px">719,0 °C</div>
<div class="a" style="left:766px;top:303.6px;width:5px;height:1px;background:#333"></div>
<div class="sl" style="left:737px;top:343.5px">669,0 °C</div>
<div class="a" style="left:766px;top:348.0px;width:5px;height:1px;background:#333"></div>
<div class="sl" style="left:737px;top:387.9px">619,0 °C</div>
<div class="a" style="left:766px;top:392.4px;width:5px;height:1px;background:#333"></div>
<div class="sl" style="left:737px;top:432.3px">569,0 °C</div>
<div class="a" style="left:766px;top:436.8px;width:5px;height:1px;background:#333"></div>
<div class="sl" style="left:737px;top:476.7px">519,0 °C</div>
<div class="a" style="left:766px;top:481.2px;width:5px;height:1px;background:#333"></div>
<div class="a" style="left:768px;top:148.2px;width:3px;height:1px;background:#555"></div>
<div class="a" style="left:768px;top:192.6px;width:3px;height:1px;background:#555"></div>
<div class="a" style="left:768px;top:237.0px;width:3px;height:1px;background:#555"></div>
<div class="a" style="left:768px;top:281.4px;width:3px;height:1px;background:#555"></div>
<div class="a" style="left:768px;top:325.8px;width:3px;height:1px;background:#555"></div>
<div class="a" style="left:768px;top:370.2px;width:3px;height:1px;background:#555"></div>
<div class="a" style="left:768px;top:414.6px;width:3px;height:1px;background:#555"></div>
<div class="a" style="left:768px;top:459.0px;width:3px;height:1px;background:#555"></div>

<!-- VOI-Liste -->
<div class="hdr" style="left:232px;top:493px;width:294px;height:14px"></div>
<div class="a tx" style="left:233px;top:496px;color:#222">VOI-Liste: Gesamt</div>
<div class="pin" style="left:508px;top:496px"></div><div class="xx" style="left:517px;top:494px">×</div>
<div class="a" style="left:235px;top:509px;width:290px;height:113px;background:#fff;border:1px solid #a09e90"></div>
<div class="a" style="left:236px;top:510px;width:288px;height:13px;background:linear-gradient(#f6f5ef,#ebe8da);border-bottom:1px solid #cfcbb8"></div>
<div class="gh" style="left:236px;width:12px;padding-left:2px;text-align:left"></div>
<div class="gh" style="left:248px;width:13px;padding-left:2px;text-align:left"></div>
<div class="gh" style="left:261px;width:12px;padding-left:2px;text-align:left"></div>
<div class="gh" style="left:273px;width:13px;padding-left:2px;text-align:left"></div>
<div class="gh" style="left:286px;width:14px;padding-left:2px;text-align:left"></div>
<div class="gh" style="left:300px;width:12px;padding-left:2px;text-align:left"></div>
<div class="gh" style="left:312px;width:15px;padding-left:2px;text-align:left">F</div>
<div class="gh" style="left:327px;width:60px;padding-left:2px;text-align:center">Name</div>
<div class="gh" style="left:387px;width:16px;padding-left:2px;text-align:left">B...</div>
<div class="gh" style="left:403px;width:22px;padding-left:2px;text-align:left">Wert</div>
<div class="gh" style="left:425px;width:23px;padding-left:2px;text-align:left">Mini...</div>
<div class="gh" style="left:448px;width:23px;padding-left:2px;text-align:left">Ma...</div>
<div class="gh" style="left:471px;width:25px;padding-left:2px;text-align:left">Alar...</div>
<div class="gh" style="left:496px;width:25px;padding-left:2px;text-align:left">IO-P...</div>
<div class="a" style="left:263px;top:511px;font-size:8px;line-height:9px;font-weight:bold;color:#e02020">A</div><div class="a" style="left:267px;top:516px;width:5px;height:5px;border:1px solid #4a70c0;background:#c8d8f8"></div>
<div class="a" style="left:275px;top:511px;font-size:8px;line-height:9px;font-weight:bold;color:#e02020">A</div><div class="a" style="left:279px;top:516px;width:5px;height:5px;border:1px solid #4a70c0;background:#c8d8f8"></div>
<div class="a" style="left:288px;top:511px;font-size:8px;line-height:9px;font-weight:bold;color:#e02020">A</div><div class="a" style="left:292px;top:516px;width:5px;height:5px;border:1px solid #4a70c0;background:#c8d8f8"></div>
<div class="a" style="left:301px;top:511px;font-size:8px;line-height:9px;font-weight:bold;color:#2020c0">V</div><div class="a" style="left:305px;top:516px;width:5px;height:5px;border:1px solid #4a70c0;background:#c8d8f8"></div>
<div class="gc" style="left:236px;top:524px;width:12px"></div>
<div class="gc" style="left:248px;top:524px;width:13px"></div>
<div class="gc" style="left:261px;top:524px;width:12px"></div>
<div class="gc" style="left:273px;top:524px;width:13px"></div>
<div class="gc" style="left:286px;top:524px;width:14px"></div>
<div class="gc" style="left:300px;top:524px;width:12px"></div>
<div class="gc" style="left:312px;top:524px;width:15px"></div>
<div class="gc" style="left:327px;top:524px;width:60px"></div>
<div class="gc" style="left:387px;top:524px;width:16px"></div>
<div class="gc" style="left:403px;top:524px;width:22px"></div>
<div class="gc" style="left:425px;top:524px;width:23px"></div>
<div class="gc" style="left:448px;top:524px;width:23px"></div>
<div class="gc" style="left:471px;top:524px;width:25px"></div>
<div class="gc" style="left:496px;top:524px;width:25px"></div>
<div class="a" style="left:239px;top:525px;font-size:9px;line-height:11px;font-weight:bold;color:#1a2ad0">V</div>
<div class="a" style="left:301px;top:526px;width:7px;height:7px;border:1px solid #7a8cb0;background:#eef2f8"></div><div class="a" style="left:303px;top:527px;width:3px;height:4px;border-right:1px solid #3a5a9a;border-bottom:1px solid #3a5a9a;transform:rotate(40deg)"></div>
<div class="a gc" style="left:312px;top:524px;width:15px;text-align:right;padding-right:3px;border:none;background:#f3f2ec">1</div>
<div class="a tx" style="left:330px;top:525px;line-height:11px">Pyrometer Mes...</div>
<div class="a tx" style="left:405px;top:525px;line-height:11px">711...</div>
<div class="gc" style="left:236px;top:536px;width:12px"></div>
<div class="gc" style="left:248px;top:536px;width:13px"></div>
<div class="gc" style="left:261px;top:536px;width:12px"></div>
<div class="gc" style="left:273px;top:536px;width:13px"></div>
<div class="gc" style="left:286px;top:536px;width:14px"></div>
<div class="gc" style="left:300px;top:536px;width:12px"></div>
<div class="gc" style="left:312px;top:536px;width:15px"></div>
<div class="gc" style="left:327px;top:536px;width:60px"></div>
<div class="gc" style="left:387px;top:536px;width:16px"></div>
<div class="gc" style="left:403px;top:536px;width:22px"></div>
<div class="gc" style="left:425px;top:536px;width:23px"></div>
<div class="gc" style="left:448px;top:536px;width:23px"></div>
<div class="gc" style="left:471px;top:536px;width:25px"></div>
<div class="gc" style="left:496px;top:536px;width:25px"></div>
<div class="a" style="left:239px;top:537px;font-size:9px;line-height:11px;font-weight:bold;color:#1a2ad0">V</div>
<div class="a" style="left:301px;top:538px;width:7px;height:7px;border:1px solid #7a8cb0;background:#eef2f8"></div><div class="a" style="left:303px;top:539px;width:3px;height:4px;border-right:1px solid #3a5a9a;border-bottom:1px solid #3a5a9a;transform:rotate(40deg)"></div>
<div class="a gc" style="left:312px;top:536px;width:15px;text-align:right;padding-right:3px;border:none;background:#f3f2ec">2</div>
<div class="a tx" style="left:330px;top:537px;line-height:11px">Pyrometer Reg...</div>
<div class="a tx" style="left:405px;top:537px;line-height:11px">866...</div>

<div class="a" style="left:232px;top:622px;width:294px;height:15px;background:#ece9d8"></div>
<div class="a" style="left:236px;top:622px;width:73px;height:13px;background:linear-gradient(#fbfaf5,#ece9d8);border:1px solid #c9c6b5;border-top:none"></div>
<div class="a" style="left:309px;top:622px;width:71px;height:13px;background:linear-gradient(#fbfaf5,#ece9d8);border:1px solid #c9c6b5;border-top:none"></div>
<div class="a" style="left:380px;top:621px;width:73px;height:15px;background:#fcfcfa;border:1px solid #b9b6a5;border-top:none"></div>
<div class="a" style="left:239px;top:625px;width:9px;height:8px;border:1px solid #6a88c0;background:repeating-linear-gradient(#fff 0 2px,#a8c0e8 2px 3px)"></div>
<div class="a tx" style="left:249px;top:624px;color:#9a9a9a">ROI-Liste: Gesamt</div>
<div class="a" style="left:312px;top:625px;width:9px;height:8px;border:1px solid #6a88c0;background:linear-gradient(135deg,#fff 40%,#40a040 50%,#fff 60%)"></div>
<div class="a tx" style="left:323px;top:624px;color:#9a9a9a">ROI: Linienprofile</div>
<div class="a" style="left:383px;top:625px;width:9px;height:8px;border:1px solid #c06080;background:repeating-linear-gradient(#fff 0 2px,#e8a0b0 2px 3px)"></div>
<div class="a tx" style="left:393px;top:624px;color:#000">VOI-Liste: Gesamt</div>

<!-- Trend -->
<div class="hdr" style="left:529px;top:493px;width:295px;height:14px"></div>
<div class="a tx" style="left:531px;top:496px;color:#222">VOI: Trendprofile</div>
<div class="pin" style="left:806px;top:496px"></div><div class="xx" style="left:815px;top:494px">×</div>
<div class="a" style="left:529px;top:506px;width:295px;height:131px;background:#ece9d8;border:1px solid #a09e90"></div>
<div class="a" style="left:530px;top:507px;width:293px;height:17px;border-radius:3px 3px 0 0;background:linear-gradient(#fbfaf5,#ebe8d9 60%,#dbd7c5)"></div>
<div class="a" style="left:530px;top:524px;width:293px;height:18px;border-radius:0 0 3px 3px;background:linear-gradient(#d6d2be,#cdc9b3)"></div>
<div class="a" style="left:532px;top:508px;width:58px;height:14px;background:#fff"></div>
<div class="a tx" style="left:534px;top:510px">5 Sekunden</div>
<div class="a" style="left:582px;top:509px;width:8px;height:12px;background:#eeede6"></div>
<div class="a" style="left:584px;top:514px;width:0;height:0;border:2px solid transparent;border-top:2px solid #000"></div>
<div class="a" style="left:664px;top:512px;width:92px;height:5px;border:1px solid #c8c5b5;border-radius:2px;background:#f4f3ee"></div>
<div class="a" style="left:568px;top:558px;width:186px;height:62px;background:#fff;border:1px solid #888"></div>
<div class="a" style="left:754px;top:558px;width:37px;height:62px;background:#fff"></div>
<div class="a tx" style="left:581px;top:543px;font-size:8px">VOI: Trendprofile: 2009-12-17 11:00:10 - 5 Sekunden</div>
<svg class="a" style="left:529px;top:550px" width="270" height="90" viewBox="529 550 270 90">
<g stroke="#d0d0d0" stroke-width="1">
<line x1="605.5" y1="558" x2="605.5" y2="620"/><line x1="642.5" y1="558" x2="642.5" y2="620"/><line x1="679.5" y1="558" x2="679.5" y2="620"/><line x1="716.5" y1="558" x2="716.5" y2="620"/>
<line x1="568" y1="568.5" x2="753" y2="568.5"/><line x1="568" y1="585.5" x2="753" y2="585.5"/><line x1="568" y1="604.5" x2="753" y2="604.5"/>
</g>
<line x1="753.5" y1="558" x2="753.5" y2="620" stroke="#222" stroke-width="1"/>
<g stroke="#222" stroke-width="1">
<line x1="568.5" y1="558" x2="568.5" y2="626"/>
<line x1="563" y1="568.5" x2="568" y2="568.5"/><line x1="563" y1="585.5" x2="568" y2="585.5"/><line x1="563" y1="604.5" x2="568" y2="604.5"/>
<line x1="568.5" y1="620" x2="568.5" y2="625"/><line x1="605.5" y1="620" x2="605.5" y2="625"/><line x1="642.5" y1="620" x2="642.5" y2="625"/><line x1="679.5" y1="620" x2="679.5" y2="625"/><line x1="716.5" y1="620" x2="716.5" y2="625"/><line x1="753.5" y1="620" x2="753.5" y2="625"/><line x1="790.5" y1="620" x2="790.5" y2="625"/>
</g>
<polyline points="711,602.5 725,581.7 753,579.2" fill="none" stroke="#e83030" stroke-width="1"/>
<polyline points="711,602.5 725,590 753,594.5" fill="none" stroke="#20a030" stroke-width="1"/>
</svg>
<div class="a sl" style="left:531px;top:564px">1000,0 °C</div>
<div class="a sl" style="left:536px;top:581px">800,0 °C</div>
<div class="a sl" style="left:536px;top:600px">600,0 °C</div>
<div class="a sl" style="left:565px;top:626px">-5</div><div class="a sl" style="left:602px;top:626px">-4</div><div class="a sl" style="left:639px;top:626px">-3</div><div class="a sl" style="left:676px;top:626px">-2</div><div class="a sl" style="left:713px;top:626px">-1</div><div class="a sl" style="left:751px;top:626px">0</div><div class="a sl" style="left:788px;top:626px">1</div>
<div class="a sl" style="left:756px;top:564px;font-size:7.5px">2009-12-17</div>
<div class="a sl" style="left:756px;top:585px;color:#20a030">Pyrometer I</div>
<div class="a sl" style="left:756px;top:605px;color:#e03030">Pyrometer I</div>
<div class="a" style="left:797px;top:543px;width:12px;height:92px;background:#f7f6f0"></div>
<div class="a" style="left:810px;top:543px;width:12px;height:92px;background:#f7f6f0"></div>
<div class="sbb u" style="left:798px;top:546px"></div><div class="sbb u" style="left:811px;top:546px"></div>
<div class="sth" style="left:811px;top:565px"></div>
<div class="sth" style="left:798px;top:577px"></div>
<div class="sbb d" style="left:811px;top:581px"></div>
<div class="sbb u" style="left:811px;top:594px"></div>
<div class="sth" style="left:811px;top:606px"></div>
<div class="sbb d" style="left:798px;top:625px"></div><div class="sbb d" style="left:811px;top:625px"></div>

<!-- icons --><svg class="a" style="left:0;top:0" width="827" height="653" viewBox="0 0 827 653"><path d="M12.5,32.5 h5 l3,3 v7 h-8 z" fill="#fff" stroke="#7d8cb0"/><path d="M17.5,32.5 v3 h3" fill="#dde" stroke="#7d8cb0"/><line x1="24.5" y1="31" x2="24.5" y2="42" stroke="#c5c2b0"/><line x1="25.5" y1="32" x2="25.5" y2="43" stroke="#fff"/><path d="M28,35 h4 l1,1 h5 v6 h-10 z" fill="#e8b030" stroke="#b07a10" stroke-width="0.8"/><path d="M29,37 h10 l-2,5 h-9 z" fill="#ffd860"/><path d="M34,34 l3,-2 l1,2" stroke="#3a9a3a" fill="none"/><path d="M44,36 l4,-3 v2 h4 v2 h-4 v2 z" fill="#f0b020" stroke="#b07010" stroke-width="0.6"/><text x="56" y="40.5" font-family="Liberation Sans" font-size="9" letter-spacing="-0.3">1/2</text><path d="M80,36 l-4,-3 v2 h-4 v2 h4 v2 z" fill="#f0b020" stroke="#b07010" stroke-width="0.6"/><line x1="83.5" y1="31" x2="83.5" y2="42" stroke="#c5c2b0"/><line x1="84.5" y1="32" x2="84.5" y2="43" stroke="#fff"/><rect x="89" y="32" width="10" height="10" fill="#5060c0"/><rect x="91" y="33" width="6" height="4" fill="#fff"/><rect x="92" y="39" width="4" height="3" fill="#c0c8e8"/><line x1="101.5" y1="31" x2="101.5" y2="42" stroke="#c5c2b0"/><line x1="102.5" y1="32" x2="102.5" y2="43" stroke="#fff"/><rect x="105.5" y="32.5" width="6" height="7" fill="#eef" stroke="#7090d0"/><rect x="109.5" y="35.5" width="6" height="7" fill="#cde" stroke="#7090d0"/><line x1="119.5" y1="31" x2="119.5" y2="42" stroke="#c5c2b0"/><line x1="120.5" y1="32" x2="120.5" y2="43" stroke="#fff"/><rect x="124" y="36" width="10" height="5" rx="1" fill="#a8b0c0" stroke="#606878" stroke-width="0.6"/><rect x="126" y="32" width="6" height="4" fill="#fff" stroke="#888" stroke-width="0.6"/><circle cx="132" cy="40" r="1.5" fill="#30b030"/><path d="M138.5,32.5 h5 l3,3 v7 h-8 z" fill="#fff" stroke="#7d8cb0"/><circle cx="143" cy="38" r="2.5" fill="none" stroke="#555" stroke-width="1.2"/><line x1="145" y1="40" x2="147" y2="42" stroke="#555" stroke-width="1.4"/><path d="M175,33 l-6,4 l6,4 z" fill="#3a6ad8"/><rect x="168" y="33" width="1.5" height="8" fill="#3a6ad8"/><rect x="183.5" y="33.5" width="122" height="2.5" rx="1.2" fill="#f8f8f4" stroke="#b8b5a5"/><rect x="302" y="32" width="2" height="6" fill="#4ab04a"/><path d="M314,33 l6,4 l-6,4 z" fill="#c4c2c8"/><line x1="325.5" y1="31" x2="325.5" y2="42" stroke="#c5c2b0"/><line x1="326.5" y1="32" x2="326.5" y2="43" stroke="#fff"/><rect x="328.5" y="29.5" width="13" height="13" fill="#dde6f6" stroke="#6e8fc8"/><rect x="332" y="32" width="2" height="8" fill="#3a6ad8"/><rect x="336" y="32" width="2" height="8" fill="#3a6ad8"/><path d="M345,32 l4,4 l-4,4 z M349,32 l4,4 l-4,4 z" fill="#3a6ad8"/><line x1="357.5" y1="31" x2="357.5" y2="42" stroke="#c5c2b0"/><line x1="358.5" y1="32" x2="358.5" y2="43" stroke="#fff"/><rect x="363.5" y="32.5" width="7" height="7" fill="#3a6ad8" stroke="#2a4aa8"/><rect x="365" y="34" width="3" height="4" fill="#fff"/><rect x="378" y="30" width="36" height="13" fill="#fff"/><text x="380" y="40" font-family="Liberation Sans" font-size="8.5">1 x</text><rect x="406" y="31" width="8" height="11" fill="#eeede6"/><path d="M408,36 h4 l-2,2.5 z" fill="#000"/><path d="M423,33 l3,4 h-2 v3 h-2 v-3 h-2 z" fill="#3a70e0"/><path d="M438,40 l3,-4 h-2 v-3 h-2 v3 h-2 z" fill="#3a70e0"/><rect x="461.5" y="33.5" width="7" height="7" fill="#e4e6ee" stroke="#b8bcd0"/><rect x="464.5" y="35.5" width="6" height="6" fill="#d8dbe8" stroke="#b8bcd0"/><line x1="474.5" y1="31" x2="474.5" y2="42" stroke="#c5c2b0"/><line x1="475.5" y1="32" x2="475.5" y2="43" stroke="#fff"/><path d="M480,37 l4,-3 v2 h4 v2 h-4 v2 z" fill="#c8ccd8" stroke="#a8acc0" stroke-width="0.6"/><path d="M503,37 l-4,-3 v2 h-4 v2 h4 v2 z" fill="#c8ccd8" stroke="#a8acc0" stroke-width="0.6"/><line x1="507.5" y1="31" x2="507.5" y2="42" stroke="#c5c2b0"/><line x1="508.5" y1="32" x2="508.5" y2="43" stroke="#fff"/><path d="M512,32 l9,9 M521,32 l-9,9" stroke="#b0b4c4" stroke-width="1.5"/><rect x="538.5" y="30.5" width="44" height="12" fill="#f4f3ec" stroke="#d4d0bc"/><text x="541" y="40" font-family="Liberation Sans" font-size="8" fill="#b8b6a8" letter-spacing="-0.4">25 Hz</text><path d="M575,36 h4 l-2,2.5 z" fill="#c0beb0"/><rect x="589" y="33" width="7" height="8" fill="#c8cad8"/><path d="M602,33 l6,4 l-6,4 z" fill="#c8cad8"/><line x1="613.5" y1="31" x2="613.5" y2="42" stroke="#c5c2b0"/><line x1="614.5" y1="32" x2="614.5" y2="43" stroke="#fff"/><path d="M618,33 h7 l-3.5,7 z" fill="none" stroke="#c0c2d0" stroke-width="1.2"/><line x1="631.5" y1="31" x2="631.5" y2="42" stroke="#c5c2b0"/><line x1="632.5" y1="32" x2="632.5" y2="43" stroke="#fff"/><ellipse cx="641" cy="36" rx="2.5" ry="3.5" fill="none" stroke="#c0c2d8" stroke-width="1.2"/><rect x="635" y="38" width="4" height="3" fill="#c8cad8"/><ellipse cx="655" cy="36" rx="2.5" ry="3.5" fill="none" stroke="#c0c2d8" stroke-width="1.2"/><rect x="649" y="38" width="4" height="3" fill="#c8cad8"/><ellipse cx="670" cy="36" rx="2.5" ry="3.5" fill="none" stroke="#c0c2d8" stroke-width="1.2"/><rect x="664" y="38" width="4" height="3" fill="#c8cad8"/><ellipse cx="684" cy="36" rx="2.5" ry="3.5" fill="none" stroke="#c0c2d8" stroke-width="1.2"/><rect x="678" y="38" width="4" height="3" fill="#c8cad8"/><line x1="692.5" y1="31" x2="692.5" y2="42" stroke="#c5c2b0"/><line x1="693.5" y1="32" x2="693.5" y2="43" stroke="#fff"/><rect x="696.5" y="33.5" width="7" height="7" fill="#e4e6ee" stroke="#b8bcd0"/><rect x="699.5" y="35.5" width="6" height="6" fill="#d8dbe8" stroke="#b8bcd0"/><circle cx="713" cy="35" r="2.5" fill="#c8cad8"/><rect x="715" y="39" width="3" height="2" fill="#c8cad8"/><line x1="723.5" y1="31" x2="723.5" y2="42" stroke="#c5c2b0"/><line x1="724.5" y1="32" x2="724.5" y2="43" stroke="#fff"/><text x="727" y="40" font-family="Liberation Sans" font-size="9" fill="#c0c2d4">A</text><rect x="733" y="37" width="4" height="4" fill="#d0d2e0"/><text x="742" y="40" font-family="Liberation Sans" font-size="9" fill="#c0c2d4">A</text><rect x="748" y="37" width="4" height="4" fill="#d0d2e0"/><text x="756" y="40" font-family="Liberation Sans" font-size="9" fill="#c0c2d4">V</text><rect x="762" y="37" width="4" height="4" fill="#d0d2e0"/><rect x="9" y="46" width="38" height="13" fill="#fff"/><text x="11" y="56" font-family="Liberation Sans" font-size="8.5" letter-spacing="-0.3">Auto</text><rect x="39" y="47" width="8" height="11" fill="#eeede6"/><path d="M41,52 h4 l-2,2.5 z" fill="#000"/><circle cx="56" cy="52" r="3.5" fill="#eef4ff" stroke="#607090" stroke-width="1"/><line x1="58.5" y1="54.5" x2="61.5" y2="57.5" stroke="#907040" stroke-width="1.6"/><line x1="54" y1="52" x2="58" y2="52" stroke="#d02020" stroke-width="1"/><line x1="56" y1="50" x2="56" y2="54" stroke="#d02020" stroke-width="1"/><circle cx="71" cy="52" r="3.5" fill="#eef4ff" stroke="#607090" stroke-width="1"/><line x1="73.5" y1="54.5" x2="76.5" y2="57.5" stroke="#907040" stroke-width="1.6"/><line x1="69" y1="52" x2="73" y2="52" stroke="#d02020" stroke-width="1"/><line x1="79.5" y1="47" x2="79.5" y2="58" stroke="#c5c2b0"/><line x1="80.5" y1="48" x2="80.5" y2="59" stroke="#fff"/><rect x="83.5" y="46.5" width="13" height="12" fill="#dde6f6" stroke="#6e8fc8"/><rect x="86" y="49" width="8" height="7" rx="1" fill="#c0c8d8" stroke="#8090b0"/><path d="M87,52.5 h6 M90,50 v5" stroke="#fff"/><rect x="104" y="48.5" width="8" height="8" fill="#7aa0e8" stroke="#4a70c8"/><rect x="106" y="50.5" width="4" height="4" fill="#a8c4f4"/><line x1="116.5" y1="47" x2="116.5" y2="58" stroke="#c5c2b0"/><line x1="117.5" y1="48" x2="117.5" y2="59" stroke="#fff"/><line x1="122.0" y1="48" x2="122.0" y2="57" stroke="#4a70d0" stroke-width="1"/><line x1="124.3" y1="48" x2="124.3" y2="57" stroke="#4a70d0" stroke-width="1"/><line x1="126.6" y1="48" x2="126.6" y2="57" stroke="#4a70d0" stroke-width="1"/><line x1="128.9" y1="48" x2="128.9" y2="57" stroke="#4a70d0" stroke-width="1"/><line x1="121" y1="49.0" x2="130" y2="49.0" stroke="#4a70d0" stroke-width="0.6" opacity="0.7"/><line x1="121" y1="51.3" x2="130" y2="51.3" stroke="#4a70d0" stroke-width="0.6" opacity="0.7"/><line x1="121" y1="53.6" x2="130" y2="53.6" stroke="#4a70d0" stroke-width="0.6" opacity="0.7"/><line x1="121" y1="55.9" x2="130" y2="55.9" stroke="#4a70d0" stroke-width="0.6" opacity="0.7"/><line x1="133.5" y1="47" x2="133.5" y2="58" stroke="#c5c2b0"/><line x1="134.5" y1="48" x2="134.5" y2="59" stroke="#fff"/><path d="M138,57 L142,48 L143,57 Z M143,57 L144,50 L148,57 Z" fill="#8060c0" opacity="0.85"/><path d="M151,57 L155,48 L156,57 Z M156,57 L157,50 L161,57 Z" fill="#8060c0" opacity="0.85"/><path d="M168,57 L172,48 L172,57 Z M174,57 L174,48 L177,57 Z" fill="#8060c0"/><path d="M190,49 L182,52.5 L190,56 Z" fill="#8868c8"/><path d="M185,52.5 h6" stroke="#fff"/><line x1="195.5" y1="47" x2="195.5" y2="58" stroke="#c5c2b0"/><line x1="196.5" y1="48" x2="196.5" y2="59" stroke="#fff"/><path d="M199,48 v9 l2,-2 l2,3 l1,-1 l-2,-3 h3 z" fill="#fff" stroke="#3a6ad8" stroke-width="0.9"/><rect x="204" y="53" width="4" height="4" fill="none" stroke="#8aa" stroke-dasharray="1 1"/><rect x="225.5" y="46.5" width="13" height="12" fill="#dde6f6" stroke="#6e8fc8"/><path d="M228,48 v7 l1.5,-1.5 l1.5,2 l1,-0.5 l-1.5,-2 h2.5 z" fill="#fff" stroke="#3a6ad8" stroke-width="0.8"/><rect x="231" y="52" width="6" height="5" fill="#f0c860" stroke="#b08020" stroke-width="0.6"/><path d="M246,52.5 h8 M250,48.5 v8" stroke="#909090" stroke-width="1.2"/><path d="M259,49 l10,7" stroke="#606060" stroke-width="1.2"/><rect x="273.5" y="48.5" width="8.5" height="8.5" fill="#f2d070" stroke="#b89030"/><circle cx="291.5" cy="52.8" r="4.4" fill="#f2d070" stroke="#b89030"/><path d="M301,49 h6 l3,3 v4 h-6 l-3,-3 z" fill="#f2d070" stroke="#b89030"/><line x1="314.5" y1="47" x2="314.5" y2="58" stroke="#c5c2b0"/><line x1="315.5" y1="48" x2="315.5" y2="59" stroke="#fff"/><rect x="319.5" y="49.5" width="7" height="7" fill="#e4e6ee" stroke="#b8bcd0"/><rect x="322.5" y="51.5" width="6" height="6" fill="#d8dbe8" stroke="#b8bcd0"/><rect x="332.5" y="49.5" width="7" height="7" fill="#e4e6ee" stroke="#b8bcd0"/><rect x="335.5" y="51.5" width="6" height="6" fill="#d8dbe8" stroke="#b8bcd0"/><rect x="346.5" y="49.5" width="7" height="7" fill="#e4e6ee" stroke="#b8bcd0"/><rect x="349.5" y="51.5" width="6" height="6" fill="#d8dbe8" stroke="#b8bcd0"/><path d="M362,48 l9,9 M371,48 l-9,9" stroke="#b8bcc8" stroke-width="1.5"/><line x1="375.5" y1="47" x2="375.5" y2="58" stroke="#c5c2b0"/><line x1="376.5" y1="48" x2="376.5" y2="59" stroke="#fff"/><rect x="378" y="50" width="10" height="8" fill="#6a88d0" stroke="#3a58a0" stroke-width="0.6"/><rect x="383" y="47" width="5" height="4" fill="#f0d040"/><rect x="380" y="52" width="3" height="4" fill="#fff"/><line x1="391.5" y1="47" x2="391.5" y2="58" stroke="#c5c2b0"/><line x1="392.5" y1="48" x2="392.5" y2="59" stroke="#fff"/><rect x="394.5" y="46.5" width="13" height="12" fill="#dde6f6" stroke="#6e8fc8"/><rect x="409.5" y="46.5" width="13" height="12" fill="#dde6f6" stroke="#6e8fc8"/><path d="M397,49 l8,6" stroke="#606060" stroke-width="1"/><rect x="400" y="52" width="7" height="5" fill="#f0c860" stroke="#b08020" stroke-width="0.6"/><path d="M412,49 l8,6" stroke="#606060" stroke-width="1"/><rect x="415" y="52" width="7" height="5" fill="#f0c860" stroke="#b08020" stroke-width="0.6"/><path d="M426,49 l8,6" stroke="#606060" stroke-width="1"/><rect x="429" y="52" width="7" height="5" fill="#f0c860" stroke="#b08020" stroke-width="0.6"/><path d="M440,49 l8,6" stroke="#606060" stroke-width="1"/><rect x="443" y="52" width="7" height="5" fill="#f0c860" stroke="#b08020" stroke-width="0.6"/><rect x="437.5" y="46.5" width="13" height="12" fill="#dde6f6" stroke="#6e8fc8"/><path d="M431,47 v5 M428.5,49.5 h5" stroke="#2040d0" stroke-width="1.2"/><path d="M445,47 v5 M442.5,49.5 h5" stroke="#e02020" stroke-width="1.2"/><rect x="454" y="51" width="9" height="7" fill="#e85a40" stroke="#a03020" stroke-width="0.6"/><rect x="456" y="53" width="5" height="3" fill="#fff"/><path d="M453,48 l4,3" stroke="#606060"/><line x1="467.5" y1="47" x2="467.5" y2="58" stroke="#c5c2b0"/><line x1="468.5" y1="48" x2="468.5" y2="59" stroke="#fff"/><rect x="471.5" y="49.5" width="7" height="7" fill="#e4e6ee" stroke="#b8bcd0"/><rect x="474.5" y="51.5" width="6" height="6" fill="#d8dbe8" stroke="#b8bcd0"/><rect x="485.5" y="49.5" width="7" height="7" fill="#e4e6ee" stroke="#b8bcd0"/><rect x="488.5" y="51.5" width="6" height="6" fill="#d8dbe8" stroke="#b8bcd0"/><rect x="499.5" y="49.5" width="7" height="7" fill="#e4e6ee" stroke="#b8bcd0"/><rect x="502.5" y="51.5" width="6" height="6" fill="#d8dbe8" stroke="#b8bcd0"/><rect x="513.5" y="49.5" width="7" height="7" fill="#e4e6ee" stroke="#b8bcd0"/><rect x="516.5" y="51.5" width="6" height="6" fill="#d8dbe8" stroke="#b8bcd0"/><text x="540" y="57" font-family="Liberation Sans" font-size="9.5" font-weight="bold" fill="#2020b0">V</text><circle cx="549" cy="49.5" r="2.3" fill="#f0e040" stroke="#b0a020" stroke-width="0.5"/><text x="555" y="57" font-family="Liberation Sans" font-size="9.5" font-weight="bold" fill="#e02020">A</text><circle cx="563" cy="49.5" r="2.3" fill="#f0e040" stroke="#b0a020" stroke-width="0.5"/><text x="569" y="57" font-family="Liberation Sans" font-size="9.5" fill="#8090c8">A</text><text x="575" y="53" font-family="Liberation Sans" font-size="6" fill="#8090c8">2</text><line x1="583.5" y1="47" x2="583.5" y2="58" stroke="#c5c2b0"/><line x1="584.5" y1="48" x2="584.5" y2="59" stroke="#fff"/><rect x="587" y="50" width="9" height="7" fill="#4a70d0" stroke="#2a4aa0" stroke-width="0.6"/><rect x="590" y="47" width="6" height="4" fill="#f0d040"/><rect x="589" y="52" width="4" height="3" fill="#fff"/><text x="600" y="55" font-family="Liberation Sans" font-size="9" fill="#8888a8">A</text><path d="M604,53 l6,6 M610,53 l-6,6" stroke="#9090a8" stroke-width="1"/><rect x="12" y="340" width="10" height="8" rx="1" fill="#b0b8d0" stroke="#7080a0" stroke-width="0.6"/><rect x="14" y="342" width="5" height="4" fill="#e0e8f8"/><line x1="25.5" y1="339" x2="25.5" y2="350" stroke="#c5c2b0"/><line x1="26.5" y1="340" x2="26.5" y2="351" stroke="#fff"/><circle cx="34" cy="344" r="3.5" fill="#eef4ff" stroke="#607090" stroke-width="1"/><line x1="36.5" y1="346.5" x2="39.5" y2="349.5" stroke="#907040" stroke-width="1.6"/><line x1="32" y1="344" x2="36" y2="344" stroke="#d02020" stroke-width="1"/><line x1="34" y1="342" x2="34" y2="346" stroke="#d02020" stroke-width="1"/><circle cx="49" cy="344" r="3.5" fill="#eef4ff" stroke="#607090" stroke-width="1"/><line x1="51.5" y1="346.5" x2="54.5" y2="349.5" stroke="#907040" stroke-width="1.6"/><line x1="47" y1="344" x2="51" y2="344" stroke="#d02020" stroke-width="1"/><line x1="59.5" y1="339" x2="59.5" y2="350" stroke="#c5c2b0"/><line x1="60.5" y1="340" x2="60.5" y2="351" stroke="#fff"/><line x1="65.0" y1="340" x2="65.0" y2="349" stroke="#4a78d8" stroke-width="1"/><line x1="67.3" y1="340" x2="67.3" y2="349" stroke="#4a78d8" stroke-width="1"/><line x1="69.6" y1="340" x2="69.6" y2="349" stroke="#4a78d8" stroke-width="1"/><line x1="71.9" y1="340" x2="71.9" y2="349" stroke="#4a78d8" stroke-width="1"/><line x1="64" y1="341.0" x2="73" y2="341.0" stroke="#4a78d8" stroke-width="0.6" opacity="0.7"/><line x1="64" y1="343.3" x2="73" y2="343.3" stroke="#4a78d8" stroke-width="0.6" opacity="0.7"/><line x1="64" y1="345.6" x2="73" y2="345.6" stroke="#4a78d8" stroke-width="0.6" opacity="0.7"/><line x1="64" y1="347.9" x2="73" y2="347.9" stroke="#4a78d8" stroke-width="0.6" opacity="0.7"/><line x1="80.0" y1="340" x2="80.0" y2="349" stroke="#b0b8d0" stroke-width="1"/><line x1="82.3" y1="340" x2="82.3" y2="349" stroke="#b0b8d0" stroke-width="1"/><line x1="84.6" y1="340" x2="84.6" y2="349" stroke="#b0b8d0" stroke-width="1"/><line x1="86.9" y1="340" x2="86.9" y2="349" stroke="#b0b8d0" stroke-width="1"/><line x1="79" y1="341.0" x2="88" y2="341.0" stroke="#b0b8d0" stroke-width="0.6" opacity="0.7"/><line x1="79" y1="343.3" x2="88" y2="343.3" stroke="#b0b8d0" stroke-width="0.6" opacity="0.7"/><line x1="79" y1="345.6" x2="88" y2="345.6" stroke="#b0b8d0" stroke-width="0.6" opacity="0.7"/><line x1="79" y1="347.9" x2="88" y2="347.9" stroke="#b0b8d0" stroke-width="0.6" opacity="0.7"/><line x1="92.5" y1="339" x2="92.5" y2="350" stroke="#c5c2b0"/><line x1="93.5" y1="340" x2="93.5" y2="351" stroke="#fff"/><line x1="98.0" y1="340" x2="98.0" y2="349" stroke="#6080c0" stroke-width="1"/><line x1="100.3" y1="340" x2="100.3" y2="349" stroke="#6080c0" stroke-width="1"/><line x1="102.6" y1="340" x2="102.6" y2="349" stroke="#6080c0" stroke-width="1"/><line x1="104.9" y1="340" x2="104.9" y2="349" stroke="#6080c0" stroke-width="1"/><line x1="97" y1="341.0" x2="106" y2="341.0" stroke="#6080c0" stroke-width="0.6" opacity="0.7"/><line x1="97" y1="343.3" x2="106" y2="343.3" stroke="#6080c0" stroke-width="0.6" opacity="0.7"/><line x1="97" y1="345.6" x2="106" y2="345.6" stroke="#6080c0" stroke-width="0.6" opacity="0.7"/><line x1="97" y1="347.9" x2="106" y2="347.9" stroke="#6080c0" stroke-width="0.6" opacity="0.7"/><circle cx="102" cy="345" r="2.2" fill="#e02020"/><line x1="112.0" y1="340" x2="112.0" y2="349" stroke="#6080c0" stroke-width="1"/><line x1="114.3" y1="340" x2="114.3" y2="349" stroke="#6080c0" stroke-width="1"/><line x1="116.6" y1="340" x2="116.6" y2="349" stroke="#6080c0" stroke-width="1"/><line x1="118.9" y1="340" x2="118.9" y2="349" stroke="#6080c0" stroke-width="1"/><line x1="111" y1="341.0" x2="120" y2="341.0" stroke="#6080c0" stroke-width="0.6" opacity="0.7"/><line x1="111" y1="343.3" x2="120" y2="343.3" stroke="#6080c0" stroke-width="0.6" opacity="0.7"/><line x1="111" y1="345.6" x2="120" y2="345.6" stroke="#6080c0" stroke-width="0.6" opacity="0.7"/><line x1="111" y1="347.9" x2="120" y2="347.9" stroke="#6080c0" stroke-width="0.6" opacity="0.7"/><circle cx="117" cy="346" r="3" fill="#fff" stroke="#506090"/><path d="M115.5,346 h3" stroke="#333"/><line x1="126.5" y1="339" x2="126.5" y2="350" stroke="#c5c2b0"/><line x1="127.5" y1="340" x2="127.5" y2="351" stroke="#fff"/><path d="M130,348.5 h9" stroke="#3a6ad8"/><path d="M134.5,340 l3,4 h-2 v3 h-2 v-3 h-2 z" fill="#3a6ad8"/><path d="M144,340.5 h9" stroke="#3a6ad8"/><path d="M148.5,348 l3,-4 h-2 v-3 h-2 v3 h-2 z" fill="#3a6ad8"/><path d="M19.5,359.5 l-6,4 l6,4 z" fill="#4a7ae0"/><rect x="12.5" y="359.5" width="1.5" height="8" fill="#4a7ae0"/><path d="M28,359.5 l6,4 l-6,4 z" fill="#4a7ae0"/><path d="M50,359.5 l-4,4 l4,4 z M46,359.5 l-4,4 l4,4 z" fill="#4a7ae0"/><rect x="57.5" y="359.5" width="2" height="8" fill="#c8c8d8"/><rect x="61.5" y="359.5" width="2" height="8" fill="#c8c8d8"/><path d="M71,359.5 l4,4 l-4,4 z M75,359.5 l4,4 l-4,4 z" fill="#4a7ae0"/><path d="M91,360 l3,4 h-2 v3 h-2 v-3 h-2 z" fill="#4a7ae0"/><path d="M105.5,367 l3,-4 h-2 v-3 h-2 v3 h-2 z" fill="#4a7ae0"/><rect x="118" y="358" width="9" height="9" fill="#5a80d8" stroke="#304880" stroke-width="0.6"/><rect x="121" y="360" width="6" height="5" fill="#e06080"/><rect x="119" y="359" width="3" height="3" fill="#fff"/><rect x="133" y="358" width="10" height="10" fill="#dde4f4" stroke="#7080b0" stroke-width="0.6"/><circle cx="139" cy="363" r="2.5" fill="#e07040"/><rect x="600.5" y="511.5" width="6" height="7" fill="#e4e6ee" stroke="#b8bcd0"/><rect x="603.5" y="513.5" width="5" height="6" fill="#d8dbe8" stroke="#b8bcd0"/><path d="M602,515 h5 M604.5,512.5 v5" stroke="#a0a8c8"/><circle cx="619" cy="516" r="3" fill="#c8d8f8" stroke="#5070b0"/><rect x="620" y="510" width="5" height="4" fill="#40b040"/><rect x="616" y="511" width="3" height="3" fill="#e03030"/><line x1="629.5" y1="509" x2="629.5" y2="521" stroke="#c5c2b0"/><line x1="630.5" y1="510" x2="630.5" y2="522" stroke="#fff"/><rect x="634" y="513" width="8" height="5" fill="#5070c8"/><rect x="638" y="510" width="5" height="3" fill="#40b040"/><rect x="636" y="511" width="3" height="2" fill="#e03030"/><line x1="647.5" y1="509" x2="647.5" y2="521" stroke="#c5c2b0"/><line x1="648.5" y1="510" x2="648.5" y2="522" stroke="#fff"/><rect x="652.5" y="511.5" width="6" height="7" fill="#e4e6ee" stroke="#b8bcd0"/><rect x="655.5" y="513.5" width="5" height="6" fill="#d8dbe8" stroke="#b8bcd0"/><rect x="764.5" y="511.5" width="7" height="7" fill="#e4e6ee" stroke="#b8bcd0"/><rect x="767.5" y="513.5" width="6" height="6" fill="#d8dbe8" stroke="#b8bcd0"/><line x1="778.5" y1="509" x2="778.5" y2="521" stroke="#c5c2b0"/><line x1="779.5" y1="510" x2="779.5" y2="522" stroke="#fff"/><ellipse cx="789" cy="515.5" rx="5" ry="3.2" fill="#5080e0" stroke="#2a50a8" stroke-width="0.6"/><circle cx="789" cy="515.5" r="1.5" fill="#fff"/><line x1="797.5" y1="509" x2="797.5" y2="521" stroke="#c5c2b0"/><line x1="798.5" y1="510" x2="798.5" y2="522" stroke="#fff"/><rect x="801" y="510.5" width="9" height="10" fill="#fff" stroke="#6090c0" stroke-width="0.6"/><path d="M803,514 l4,-2 v4 z" fill="#30a030"/><path d="M808,517 l-4,2 v-4 z" fill="#e03030"/><rect x="535" y="527" width="10" height="8" fill="#fff" stroke="#c04040" stroke-width="0.6"/><rect x="535" y="527" width="10" height="2" fill="#e04040"/><path d="M537,531.5 h6" stroke="#40a040" stroke-width="1.2"/><rect x="554" y="530" width="9" height="7" fill="#e8e8f0" stroke="#7080a0" stroke-width="0.6"/><rect x="556" y="526" width="6" height="3" fill="#e04040"/><rect x="558" y="529" width="6" height="3" fill="#f0c040"/><rect x="572" y="527" width="7" height="9" fill="#dde4f8" stroke="#6070a0" stroke-width="0.6"/><rect x="575" y="530" width="7" height="7" fill="#3a58b8"/><rect x="577" y="531" width="3" height="2" fill="#fff"/></svg><!-- /icons -->
<!-- status bar -->
<div class="a" style="left:3px;top:637px;width:821px;height:13px;background:#ece9d8;border-top:1px solid #d8d4c0"></div>
<div class="a" style="left:4px;top:640px;font-size:8px;letter-spacing:-0.4px;line-height:10px">Bereit</div>
<div class="a" style="left:760px;top:640px;font-size:7.5px;letter-spacing:-0.3px;line-height:10px;color:#a8a69a">UF</div>
<div class="a" style="left:777px;top:640px;font-size:7.5px;letter-spacing:-0.4px;line-height:10px;color:#000">NUM</div>
<div class="a" style="left:798px;top:640px;font-size:7.5px;letter-spacing:-0.3px;line-height:10px;color:#a8a69a">RF</div>
</body></html>
